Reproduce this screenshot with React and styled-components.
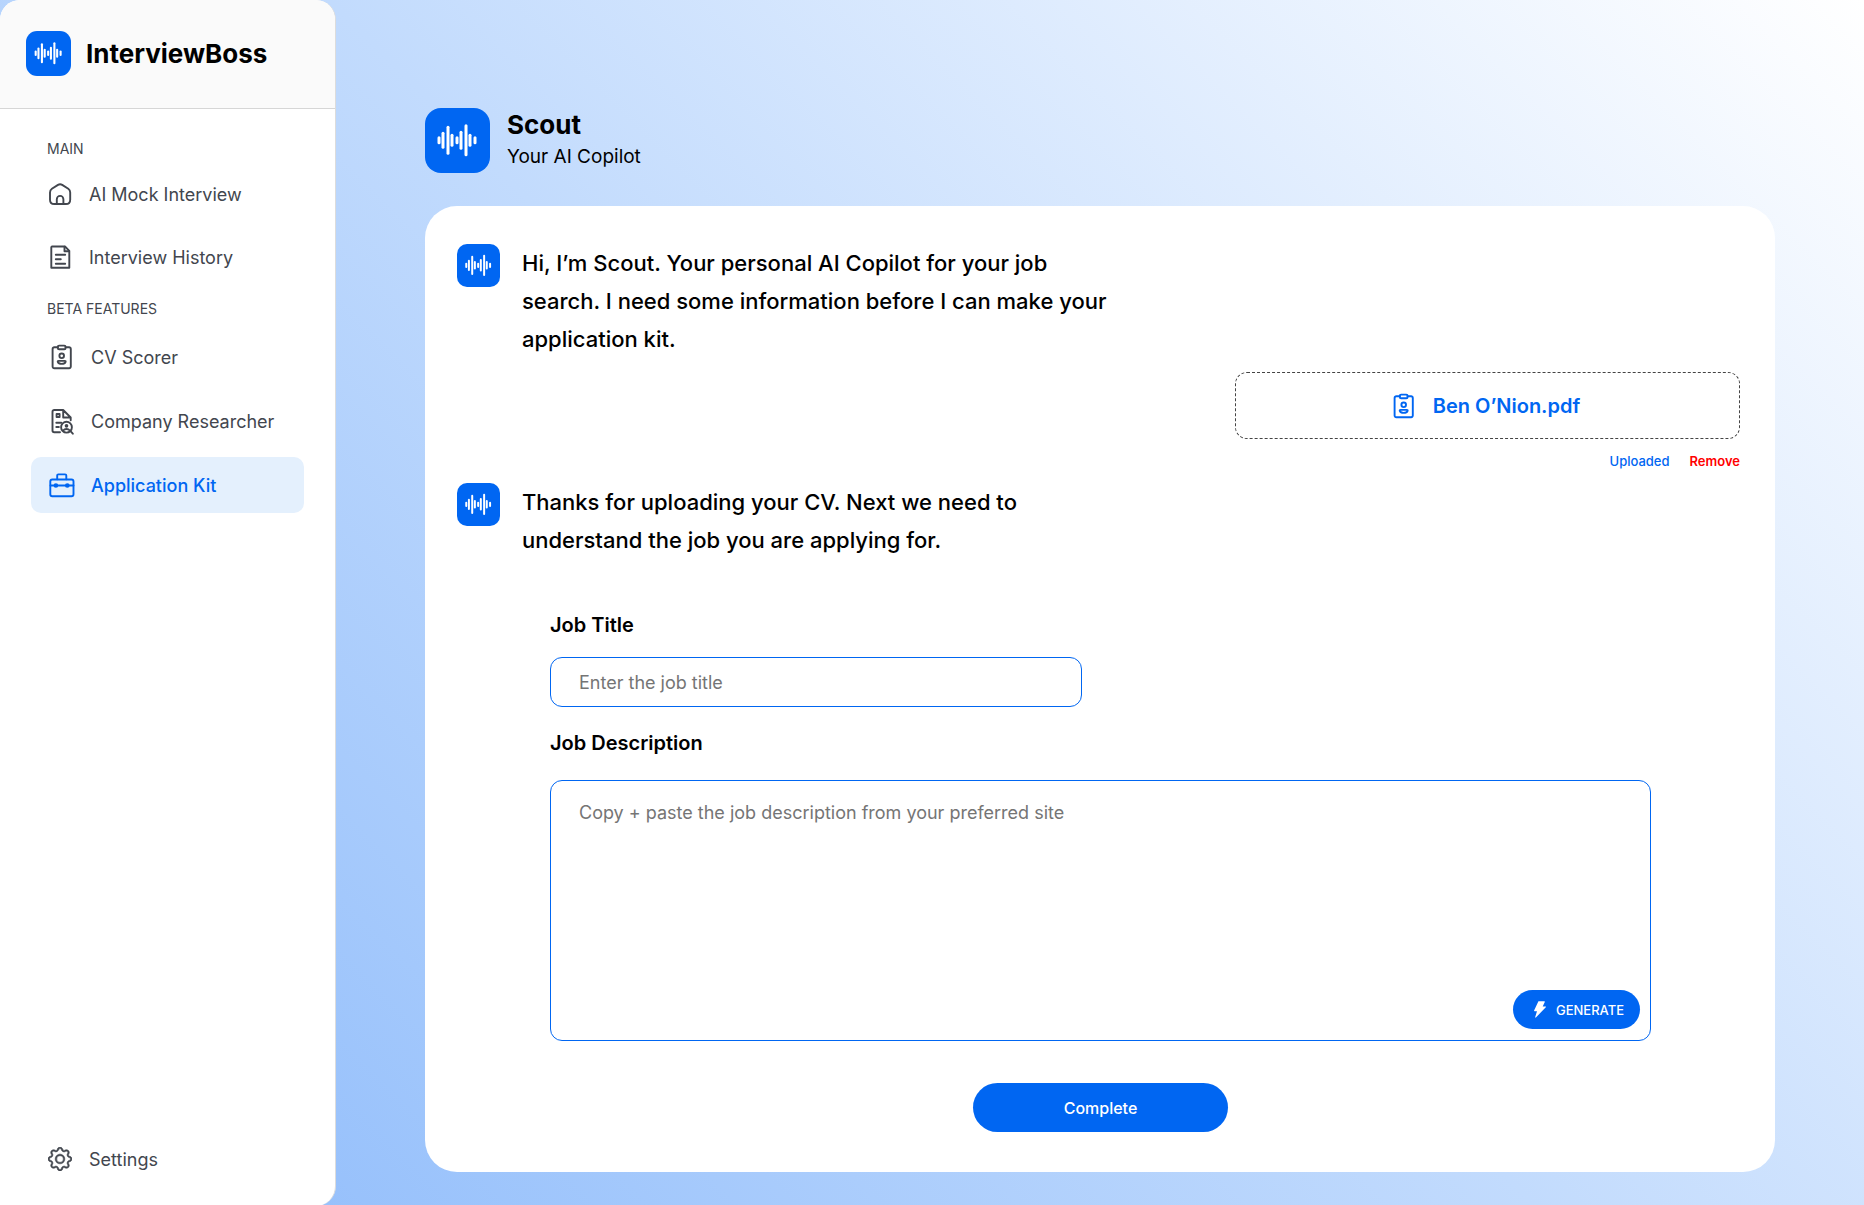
import React, { useState, useId } from "react";
import styled, { createGlobalStyle } from "styled-components";
import { BsGear } from "react-icons/bs";

const blue = "#0066f2";
const grey = "#42464e";

const GlobalStyle = createGlobalStyle`
  * {
    box-sizing: border-box;
  }

  body {
    margin: 0;
    color: #000;
    font-family: Inter, "Liberation Sans", sans-serif;
  }

  h1, h2, p, ul {
    margin: 0;
    padding: 0;
  }

  button, input, textarea {
    font-family: inherit;
  }
`;

const Page = styled.div`
  display: flex;
  min-height: 100vh;
  background: linear-gradient(45deg, #8cbafb, #c2dbfd 50%, #fff);
`;

const Sidebar = styled.aside`
  display: flex;
  flex-direction: column;
  flex: 0 0 336px;
  overflow: hidden;
  background: #fff;
  border-right: 1px solid #dcdcdc;
  border-radius: 20px 20px 20px 0;
`;

const Brand = styled.div`
  display: flex;
  align-items: center;
  gap: 15px;
  height: 109px;
  padding: 0 26px 2px;
  background: #fafafa;
  border-bottom: 1px solid #d6d6d6;
`;

const BrandName = styled.span`
  font-size: 26px;
  font-weight: 700;
`;

const Badge = styled.span`
  display: flex;
  flex: none;
  width: ${(props) => props.$size}px;
  height: ${(props) => props.$size}px;
  background: ${blue};
  border-radius: ${(props) => props.$radius}px;
`;

const Nav = styled.nav`
  display: flex;
  flex-direction: column;
  flex: 1;
  padding: 30px 31px 19px;
`;

const NavTitle = styled.h2`
  padding-left: 16px;
  margin-bottom: ${(props) => props.$space}px;
  color: ${grey};
  font-size: 14px;
  font-weight: 400;
  line-height: 20px;
`;

const NavList = styled.ul`
  display: flex;
  flex-direction: column;
  gap: ${(props) => props.$gap}px;
  margin-bottom: 14px;
  list-style: none;

  &:last-child {
    margin: auto 0 0;
  }
`;

const NavLink = styled.a`
  display: flex;
  align-items: center;
  gap: 16px;
  height: 56px;
  padding: 0 16px;
  border-radius: 10px;
  background: ${(props) => (props.$active ? "#e4f0fd" : "transparent")};
  color: ${(props) => (props.$active ? blue : grey)};
  font-size: 18px;
  font-weight: ${(props) => (props.$active ? 500 : 400)};
  text-decoration: none;
`;

const Main = styled.main`
  flex: 1;
  min-width: 0;
  padding: 108px 89px 34px;
`;

const Header = styled.header`
  display: flex;
  align-items: center;
  gap: 17px;
  margin-bottom: 33px;
`;

const Title = styled.h1`
  font-size: 26px;
  font-weight: 700;
  line-height: 32px;
`;

const Subtitle = styled.p`
  font-size: 19px;
  line-height: 32px;
`;

const Card = styled.section`
  display: flex;
  flex-direction: column;
  padding: 38px 35px 40px 32px;
  background: #fff;
  border-radius: 32px;
`;

const Message = styled.div`
  display: flex;
  gap: 22px;
`;

const MessageText = styled.p`
  max-width: 592px;
  font-size: 22px;
  font-weight: 500;
  line-height: 38px;
`;

const Upload = styled.div`
  align-self: flex-end;
  width: 100%;
  max-width: 505px;
  margin: 14px 0 12px;
`;

const FileBox = styled.div`
  display: flex;
  align-items: center;
  justify-content: center;
  gap: 16px;
  height: 67px;
  padding-right: 6px;
  border: 1px dashed #444;
  border-radius: 12px;
  color: ${blue};
  font-size: 20px;
  font-weight: 600;
`;

const FileStatus = styled.div`
  display: flex;
  justify-content: flex-end;
  gap: 20px;
  margin-top: 12px;
  color: ${blue};
  font-size: 13px;
  font-weight: 500;
  line-height: 20px;
`;

const RemoveButton = styled.button`
  padding: 0;
  border: 0;
  background: none;
  color: #f00;
  font-size: 13px;
  font-weight: 600;
  line-height: 20px;
  cursor: pointer;
`;

const Form = styled.form`
  display: flex;
  flex-direction: column;
  padding: 54px 89px 0 93px;
`;

const Label = styled.label`
  margin-bottom: ${(props) => props.$space}px;
  font-size: 20px;
  font-weight: 600;
  line-height: 24px;
`;

const Input = styled.input`
  width: 100%;
  max-width: 532px;
  height: 50px;
  margin-bottom: 24px;
  padding: 0 28px;
  border: 1px solid ${blue};
  border-radius: 12px;
  font-size: 18px;

  &::placeholder {
    color: #757575;
  }
`;

const TextAreaWrap = styled.div`
  position: relative;
  display: flex;
`;

const TextArea = styled.textarea`
  width: 100%;
  height: 261px;
  padding: 20px 28px;
  border: 1px solid ${blue};
  border-radius: 12px;
  font-size: 18px;
  line-height: 24px;
  resize: none;

  &::placeholder {
    color: #757575;
  }
`;

const Button = styled.button`
  display: flex;
  align-items: center;
  justify-content: center;
  border: 0;
  border-radius: 25px;
  background: ${blue};
  color: #fff;
  font-weight: 500;
  cursor: pointer;
`;

const GenerateButton = styled(Button)`
  position: absolute;
  right: 11px;
  bottom: 12px;
  gap: 10px;
  height: 39px;
  padding: 0 16px 0 21px;
  font-size: 13px;
`;

const CompleteButton = styled(Button)`
  align-self: center;
  width: 255px;
  height: 49px;
  margin-top: 42px;
  font-size: 16px;
`;

// [x, height] of every bar in the wave
const bars = [
  [14, 8],
  [18, 17],
  [23, 29],
  [27, 13],
  [32, 8],
  [36, 19],
  [41, 32],
  [45, 13],
  [50, 8],
];

const Logo = ({ size, radius }) => (
  <Badge $size={size} $radius={radius}>
    <svg viewBox="0 0 65 65" fill="#fff" aria-hidden="true">
      {bars.map(([x, height]) => (
        <rect key={x} x={x - 1.5} y={32.2 - height / 2} width="3" height={height} rx="1.5" />
      ))}
    </svg>
  </Badge>
);

const Icon = ({ size, children }) => (
  <svg
    width={size}
    height={size}
    viewBox={`0 0 ${size} ${size}`}
    fill="none"
    stroke="currentColor"
    strokeWidth="1.9"
    strokeLinecap="round"
    strokeLinejoin="round"
    aria-hidden="true"
  >
    {children}
  </svg>
);

const HomeIcon = () => (
  <Icon size={26}>
    <path d="M3 11.4c0-1.5.6-2.7 1.9-3.6l6.1-3.9c1.4-.8 2.8-.8 4.2 0l6.1 3.9c1.3.9 1.9 2.1 1.9 3.6v7.3c0 2.8-1.5 4.3-4.3 4.3H7.3C4.5 23 3 21.5 3 18.7z" />
    <path d="M9.8 22.8v-4.6a3.300 3.300 0 0 1 6.600 0v4.600" />
  </Icon>
);

const HistoryIcon = () => (
  <Icon size={26}>
    <path d="M5 2.500h13l4.300 4.300v16.900H4.300V3.200z" />
    <path d="M17.500 2.800v4.400h4.500M8.800 10.700h9.400M8.800 15.200h5M8.800 19.700h9.400" />
  </Icon>
);

const CvIcon = () => (
  <Icon size={28}>
    <path d="M10.800 4.200H7.300a1.700 1.700 0 0 0-1.700 1.700v17.700a1.700 1.700 0 0 0 1.700 1.700h14.800a1.700 1.700 0 0 0 1.700-1.700V5.900a1.700 1.700 0 0 0-1.700-1.700h-3.500" />
    <rect x="10.800" y="2.600" width="7.800" height="3.600" rx="1.300" />
    <circle cx="14.700" cy="12.800" r="2.300" />
    <path d="M11.600 17.900h6.200c.7 0 1 .4.8 1-.5 1.300-1.900 2-3.900 2s-3.400-.7-3.900-2c-.2-.6.1-1 .8-1z" />
  </Icon>
);

const CompanyIcon = () => (
  <Icon size={28}>
    <path d="M13 25.200H7.200a1.700 1.700 0 0 1-1.700-1.700V4.700A1.700 1.700 0 0 1 7.200 3h9l7.500 7.500v2.700M16.200 3v7.500h7.500" />
    <path d="M9.600 7h3v3h-3zM9.300 15.700h5M9.300 20h2.600" />
    <circle cx="19.500" cy="20.200" r="5.400" />
    <path d="M23.500 24.200l2.300 2.500M16.500 23.300c1.200-1.700 4.800-1.700 6 0" />
    <circle cx="19.500" cy="18.800" r=".9" fill="currentColor" />
  </Icon>
);

const KitIcon = () => (
  <Icon size={28}>
    <rect x="3.300" y="8.500" width="23.200" height="16.800" rx="2" />
    <path d="M10.200 8.300V4.600c0-.8.4-1.200 1.200-1.200h6.700c.8 0 1.200.4 1.200 1.200v3.700M3.500 14.500h23" />
    <circle cx="8.900" cy="14.500" r="1.400" fill="currentColor" />
    <circle cx="20.300" cy="14.500" r="1.400" fill="currentColor" />
  </Icon>
);

const SettingsIcon = () => (
  <Icon size={26}>
    <BsGear x="1" y="1" size={24} strokeWidth=".35" />
  </Icon>
);

const BoltIcon = () => (
  <svg width="12" height="17" viewBox="0 0 12 17" fill="currentColor" aria-hidden="true">
    <path d="M4.800.3h5.600c.3 0 .5.3.4.6L8.700 5.500h2.800c.5 0 .6.4.3.7L1.900 16.500c-.3.3-.8.1-.7-.4L3 10.300H.6c-.4 0-.6-.3-.5-.7L4.200.7c.1-.3.300-.4.600-.4z" />
  </svg>
);

const mainLinks = [
  { name: "AI Mock Interview", icon: HomeIcon },
  { name: "Interview History", icon: HistoryIcon },
];

const betaLinks = [
  { name: "CV Scorer", icon: CvIcon },
  { name: "Company Researcher", icon: CompanyIcon },
  { name: "Application Kit", icon: KitIcon, active: true },
];

const footerLinks = [{ name: "Settings", icon: SettingsIcon }];

const NavItems = ({ links, gap }) => (
  <NavList $gap={gap}>
    {links.map(({ name, icon: ItemIcon, active }) => (
      <li key={name}>
        <NavLink href="#" $active={active} aria-current={active ? "page" : undefined}>
          <ItemIcon />
          {name}
        </NavLink>
      </li>
    ))}
  </NavList>
);

const ScoutMessage = ({ children }) => (
  <Message>
    <Logo size={43} radius={10} />
    <MessageText>{children}</MessageText>
  </Message>
);

const App = () => {
  const id = useId();
  const [job, setJob] = useState({ title: "", description: "" });

  const onChange = (event) => {
    setJob({ ...job, [event.target.name]: event.target.value });
  };

  const onSubmit = (e) => {
    e.preventDefault();
  };

  return (
    <Page>
      <GlobalStyle />
      <Sidebar>
        <Brand>
          <Logo size={45} radius={11} />
          <BrandName>InterviewBoss</BrandName>
        </Brand>
        <Nav>
          <NavTitle $space={7}>MAIN</NavTitle>
          <NavItems links={mainLinks} gap={7} />
          <NavTitle $space={10}>BETA FEATURES</NavTitle>
          <NavItems links={betaLinks} gap={8} />
          <NavItems links={footerLinks} gap={8} />
        </Nav>
      </Sidebar>
      <Main>
        <Header>
          <Logo size={65} radius={16} />
          <div>
            <Title>Scout</Title>
            <Subtitle>Your AI Copilot</Subtitle>
          </div>
        </Header>
        <Card>
          <ScoutMessage>
            Hi, I’m Scout. Your personal AI Copilot for your job search. I need some information before I can make your
            application kit.
          </ScoutMessage>
          <Upload>
            <FileBox>
              <CvIcon />
              Ben O’Nion.pdf
            </FileBox>
            <FileStatus>
              <span>Uploaded</span>
              <RemoveButton type="button">Remove</RemoveButton>
            </FileStatus>
          </Upload>
          <ScoutMessage>Thanks for uploading your CV. Next we need to understand the job you are applying for.</ScoutMessage>
          <Form onSubmit={onSubmit}>
            <Label htmlFor={`${id}-title`} $space={20}>
              Job Title
            </Label>
            <Input
              id={`${id}-title`}
              type="text"
              name="title"
              placeholder="Enter the job title"
              value={job.title}
              onChange={onChange}
            />
            <Label htmlFor={`${id}-description`} $space={25}>
              Job Description
            </Label>
            <TextAreaWrap>
              <TextArea
                id={`${id}-description`}
                name="description"
                placeholder="Copy + paste the job description from your preferred site"
                value={job.description}
                onChange={onChange}
              />
              <GenerateButton type="button">
                <BoltIcon />
                GENERATE
              </GenerateButton>
            </TextAreaWrap>
            <CompleteButton type="submit">Complete</CompleteButton>
          </Form>
        </Card>
      </Main>
    </Page>
  );
};

export default App;
